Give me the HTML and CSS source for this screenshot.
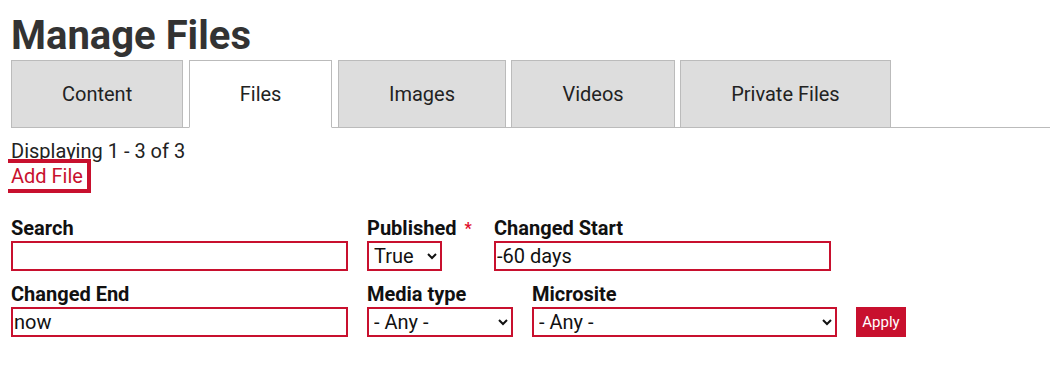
FILE: index.html
```html
<!DOCTYPE html>
<html lang="en">
<head>
<meta charset="utf-8">
<title>Manage Files</title>
<link rel="stylesheet" href="styles.css">
</head>
<body>
<main class="page">
  <h1 class="title">Manage Files</h1>
  <ul class="tabs">
    <li class="tab">Content</li>
    <li class="tab tab-active">Files</li>
    <li class="tab">Images</li>
    <li class="tab">Videos</li>
    <li class="tab">Private Files</li>
  </ul>
  <div class="summary">Displaying 1 - 3 of 3</div>
  <div class="actions"><a class="add-link" href="#">Add File</a></div>
  <form class="filters">
    <div class="field">
      <label class="label">Search</label>
      <input class="input input-wide" type="text" value="">
    </div>
    <div class="field field-published">
      <label class="label">Published <span class="req">*</span></label>
      <select class="select select-pub"><option>True</option><option>False</option></select>
    </div>
    <div class="field">
      <label class="label">Changed Start</label>
      <input class="input input-wide" type="text" value="-60 days">
    </div>
    <div class="field">
      <label class="label">Changed End</label>
      <input class="input input-wide" type="text" value="now">
    </div>
    <div class="field">
      <label class="label">Media type</label>
      <select class="select select-media"><option>- Any -</option></select>
    </div>
    <div class="field">
      <label class="label">Microsite</label>
      <select class="select select-site"><option>- Any -</option></select>
    </div>
    <div class="field field-action">
      <button class="apply" type="button">Apply</button>
    </div>
  </form>
</main>
</body>
</html>
```

FILE: styles.css
```css
* { box-sizing: border-box; }

body {
  margin: 8px;
  font-family: Roboto, "Liberation Sans", Arial, sans-serif;
  color: #111;
  background: #fff;
}

.page {
  padding: 0 3px;
}

.title {
  margin: 4px 0 0;
  font-size: 40px;
  line-height: 48px;
  font-weight: 700;
  color: #333;
}

.tabs {
  list-style: none;
  margin: 0;
  padding: 0;
  display: flex;
  gap: 5.5px;
  height: 68px;
  border-bottom: 1px solid #bbb;
}

.tab {
  height: 68px;
  padding: 0 50px;
  display: flex;
  align-items: center;
  background: #ddd;
  border: 1px solid #bbb;
  font-size: 20px;
  color: #222;
}

.tab-active {
  background: #fff;
  border-bottom-color: #fff;
}

.summary {
  margin-top: 12px;
  font-size: 20px;
  line-height: 23px;
  color: #222;
}

.actions {
  display: flex;
  margin: -4px 0 0 -9px;
}

.add-link {
  display: block;
  padding: 1px 4px 1px 5px;
  border: 4px solid #c8102e;
  font-size: 20px;
  line-height: 24px;
  color: #c8102e;
  text-decoration: none;
}

.filters {
  display: flex;
  flex-wrap: wrap;
  column-gap: 19px;
  row-gap: 12px;
  margin-top: 24px;
}

.field {
  display: flex;
  flex-direction: column;
  align-items: flex-start;
}

.field-published {
  min-width: 108px;
}

.field-action {
  justify-content: flex-end;
}

.label {
  font-size: 20px;
  line-height: 23px;
  font-weight: 700;
  color: #111;
  margin-bottom: 1px;
}

.req {
  color: #e0102e;
  font-size: 16px;
  vertical-align: top;
  margin-left: 3px;
}

.input,
.select {
  height: 30px;
  border: 2px solid #c8102e;
  border-radius: 0;
  background: #fff;
  font-family: Roboto, "Liberation Sans", Arial, sans-serif;
  font-size: 20px;
  color: #111;
  margin: 0;
}

.input {
  padding: 0 1px;
}

.select {
  padding: 0 1px;
}

.input-wide { width: 337px; }
.select-pub { width: 75px; }
.select-media { width: 146px; }
.select-site { width: 305px; }

.apply {
  height: 30px;
  width: 50px;
  padding: 0;
  border: none;
  background: #c8102e;
  color: #fff;
  font-family: Roboto, "Liberation Sans", Arial, sans-serif;
  font-size: 15px;
}
```
